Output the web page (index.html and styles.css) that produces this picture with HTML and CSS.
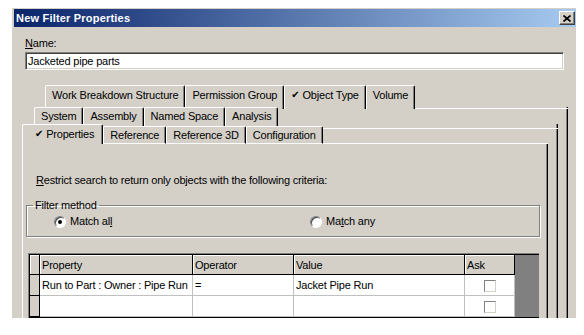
FILE: index.html
```html
<!DOCTYPE html>
<html lang="en">
<head>
  <meta charset="UTF-8" />
  <title>New Filter Properties</title>
  <link rel="stylesheet" href="styles.css">
</head>
<body>

<div class="window">
  <div class="titlebar">
    <span class="title">New Filter Properties</span>
    <span class="close">
      <svg width="8" height="7" viewBox="0 0 8 7"><path d="M0.5 0.5 L7.5 6.5 M7.5 0.5 L0.5 6.5" stroke="#000" stroke-width="1.7" fill="none"/></svg>
    </span>
  </div>

  <div class="client">
    <div class="name-label"><u>N</u>ame:</div>
    <div class="textbox">Jacketed pipe parts</div>

    <!-- three rows of tabs, each one over its own page -->
    <div class="tabctl">
      <div class="strip r1">
        <span class="tab">Work Breakdown Structure</span>
        <span class="tab">Permission Group</span>
        <span class="tab"><i class="chk">&#10004;</i>Object Type</span>
        <span class="tab">Volume</span>
        <span class="fill"></span>
      </div>
      <div class="pane p1">
        <div class="strip r2">
          <span class="tab">System</span>
          <span class="tab">Assembly</span>
          <span class="tab">Named Space</span>
          <span class="tab">Analysis</span>
          <span class="fill"></span>
        </div>
        <div class="pane p2">
          <div class="strip r3">
            <span class="tab active"><i class="chk">&#10004;</i>Properties</span>
            <span class="tab">Reference</span>
            <span class="tab">Reference 3D</span>
            <span class="tab">Configuration</span>
            <span class="fill"></span>
          </div>
          <div class="pane p3">
            <div class="hint"><u>R</u>estrict search to return only objects with the following criteria:</div>

            <fieldset class="group">
              <legend>Filter method</legend>
              <div class="radios">
                <label class="radio"><span class="dot on"></span>Match al<u>l</u></label>
                <label class="radio"><span class="dot"></span>Ma<u>t</u>ch any</label>
              </div>
            </fieldset>

            <div class="grid">
              <div class="grid-in">
                <table class="crit">
                  <tr class="head">
                    <th class="rh"></th>
                    <th class="c-prop">Property</th>
                    <th class="c-op">Operator</th>
                    <th class="c-val">Value</th>
                    <th class="c-ask">Ask</th>
                  </tr>
                  <tr>
                    <td class="rh"></td>
                    <td>Run to Part : Owner : Pipe Run</td>
                    <td>=</td>
                    <td>Jacket Pipe Run</td>
                    <td class="ask"><span class="box"></span></td>
                  </tr>
                  <tr>
                    <td class="rh"></td>
                    <td></td>
                    <td></td>
                    <td></td>
                    <td class="ask"><span class="box"></span></td>
                  </tr>
                </table>
                <div class="empty"></div>
              </div>
            </div>
          </div>
        </div>
      </div>
    </div>
  </div>
</div>

</body>
</html>
```

FILE: styles.css
```css
body {
  margin: 0;
  background: #fff;
  font-family: "Liberation Sans", Arial, sans-serif;
  font-size: 11px;
  letter-spacing: -0.2px;
  color: #000;
}

.window {
  margin: 8px 0 0 12px;
  width: 564px;
  height: 310px;
  box-sizing: border-box;
  padding: 1px 0 0 2px;
  background: #d4d0c8;
  overflow: hidden;
}

.titlebar {
  height: 18px;
  display: flex;
  align-items: center;
  justify-content: space-between;
  padding-left: 2px;
  background: linear-gradient(to right, #0a246a, #a6caf0);
  color: #fff;
  font-weight: bold;
  letter-spacing: 0.2px;
}

.close {
  width: 16px;
  height: 14px;
  box-sizing: border-box;
  margin-right: 1px;
  display: flex;
  align-items: center;
  justify-content: center;
  background: #d4d0c8;
  border: 1px solid;
  border-color: #fff #404040 #404040 #fff;
  box-shadow: inset -1px -1px #808080;
}

.client {
  padding: 10px 0 0 11px;
}

.name-label {
  line-height: 13px;
}

.textbox {
  margin-top: 2px;
  width: 539px;
  height: 18px;
  box-sizing: border-box;
  padding-left: 2px;
  line-height: 16px;
  background: #fff;
  border: 1px solid;
  border-color: #808080 #fff #fff #808080;
  box-shadow: inset 1px 1px #404040, inset -1px -1px #d4d0c8;
}

/* tabs */
.tabctl {
  margin: 15px 0 0 -3px;
  width: 546px;
}

.strip {
  display: flex;
}

.strip.r1 {
  height: 24px;
  padding-left: 23px;
}

.strip.r2 {
  height: 22px;
  margin-top: -2px;
  padding-left: 12px;
}

.strip.r3 {
  height: 20px;
  margin-top: -5px;
}

.tab {
  display: flex;
  align-items: center;
  padding: 0 6px;
  background: #d4d0c8;
  border-top: 1px solid #fff;
  border-left: 1px solid #fff;
  border-right: 1px solid #000;
  box-shadow: inset -1px 0 #808080;
  border-radius: 2px 2px 0 0;
  white-space: nowrap;
}

.strip.r1 .tab,
.strip.r2 .tab {
  align-items: flex-start;
  padding-top: 3px;
  padding-bottom: 3px;
}

.strip.r2 .tab {
  padding-top: 2px;
}

.strip.r3 .tab {
  margin-top: 2px;
  border-bottom: 1px solid #fff;
}

.strip.r3 .tab.active {
  margin-top: 0;
  border-bottom: 0;
  padding: 0 8px 2px 12px;
}

.chk {
  font-style: normal;
  font-family: "DejaVu Sans", sans-serif;
  font-size: 10px;
  margin-right: 3px;
}

.fill {
  flex: 1;
  border-bottom: 1px solid #fff;
}

.pane {
  border-right: 1px solid #000;
  box-shadow: inset -1px 0 #808080;
  padding-right: 9px;
}

.pane.p3 {
  padding-right: 0;
  height: 200px;
  border-left: 1px solid #fff;
}

.hint {
  padding: 30px 0 0 13px;
  line-height: 13px;
}

.group {
  margin: 12px 0 0 3px;
  width: 514px;
  box-sizing: border-box;
  padding: 0 0 8px 27px;
  min-width: 0;
  border: 1px solid #808080;
  box-shadow: inset 1px 1px #fff, 1px 1px #fff;
}

.group legend {
  padding: 0 2px;
  margin-left: -21px;
  line-height: 13px;
}

.radios {
  display: flex;
  padding-top: 3px;
  line-height: 13px;
}

.radio {
  display: flex;
  align-items: center;
  flex: none;
  width: 256px;
}

.dot {
  width: 12px;
  height: 12px;
  box-sizing: border-box;
  margin-right: 4px;
  border-radius: 50%;
  background: #fff;
  border: 1px solid;
  border-color: #808080 #fff #fff #808080;
  box-shadow: inset 1px 1px #404040;
  display: flex;
  align-items: center;
  justify-content: center;
}

.dot.on::after {
  content: '';
  width: 4px;
  height: 4px;
  border-radius: 50%;
  background: #000;
}

/* criteria grid */
.grid {
  margin: 16px 0 0 5px;
  width: 510px;
  border-top: 1px solid #808080;
  border-left: 1px solid #808080;
}

.grid-in {
  display: flex;
  border-top: 1px solid #000;
  border-left: 1px solid #000;
  border-bottom: 2px solid #000;
  background: #808080;
}

.crit {
  border-collapse: separate;
  border-spacing: 0;
  background: #fff;
}

.crit th,
.crit td {
  padding: 0 0 0 2px;
  text-align: left;
  font-weight: normal;
  white-space: nowrap;
  border-right: 1px solid #c0c0c0;
  border-bottom: 1px solid #c0c0c0;
}

.crit tr {
  height: 21px;
}

.crit tr.head {
  height: 20px;
}

.crit th {
  background: #d4d0c8;
  border-color: #000;
  box-shadow: inset 1px 1px #fff;
}

.crit .rh {
  width: 9px;
  padding: 0;
  background: #d4d0c8;
  border-color: #000;
}

.c-prop { width: 150px; }
.c-op { width: 98px; }
.c-val { width: 168px; }
.c-ask { width: 47px; }

.crit td.ask {
  text-align: center;
  padding: 0;
}

.box {
  display: inline-block;
  vertical-align: middle;
  width: 12px;
  height: 12px;
  box-sizing: border-box;
  border: 1px solid;
  border-color: #808080 #d4d0c8 #d4d0c8 #808080;
  background: #fff;
}

.empty {
  flex: 1;
}
```
